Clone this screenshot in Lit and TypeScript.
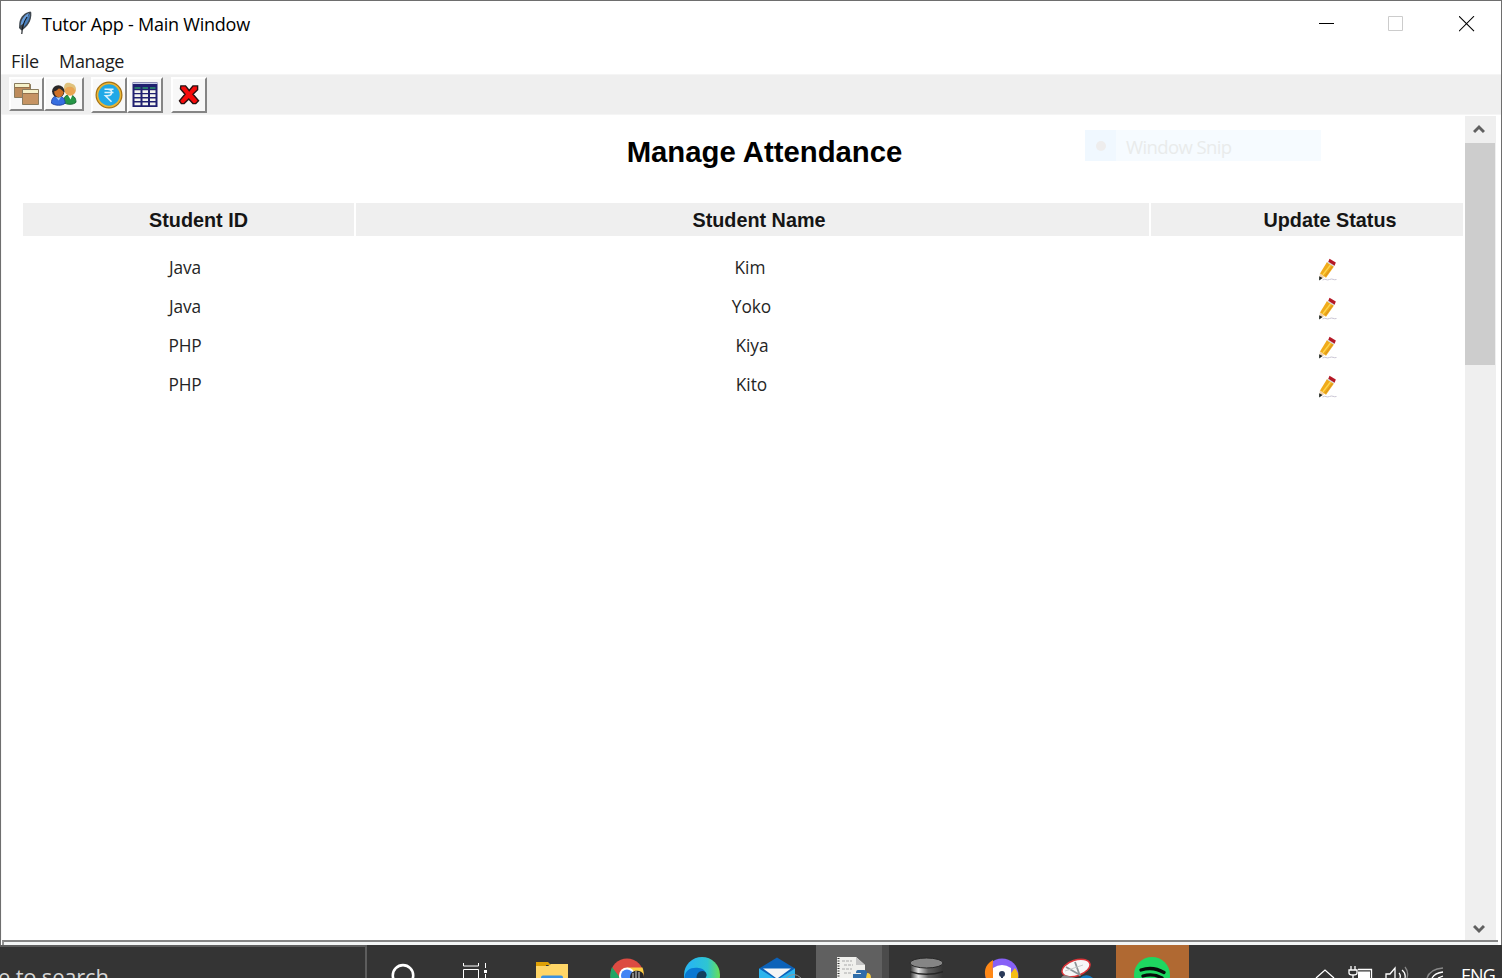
import { LitElement, html, css, svg } from "lit";
import { customElement } from "lit/decorators.js";

const rows = [
  { id: "Java", name: "Kim", cls: "kim" },
  { id: "Java", name: "Yoko", cls: "yoko" },
  { id: "PHP", name: "Kiya", cls: "kiya" },
  { id: "PHP", name: "Kito", cls: "kito" },
];

const feather = html`<svg class="feather" width="16" height="26" viewBox="0 0 16 26">
  <path d="M13.500 1.500C8 2 3 7 2.300 13L2 18L4.500 20.500C10 17.500 15 11 14.300 2.500Z" fill="#3f474f"/>
  <path d="M12 3C8 4.500 4 9 3.500 15.500L9 12Z" fill="#6a9fdc"/>
  <path d="M13 3.500C13.300 9 10 14 6.500 17.500L7 12.500Z" fill="#4a80bd"/>
  <path d="M10 7C8 10 5 15 4.800 24" fill="none" stroke="#15191d" stroke-width="1.100"/>
</svg>`;

const folders = html`<svg width="36" height="36" viewBox="0 0 36 36">
  <g stroke="#8a7c5f" stroke-width="1"><path d="M5.500 7.500h15l1 1v13h-16z" fill="#bd8b5b"/><path d="M6 8h14v3h-14z" fill="#f5f1c9" stroke="none"/><path d="M6 11.500h15" stroke="#94704b"/>
  <path d="M13.500 13.500h16v15h-16z" fill="#c69463"/><path d="M14 14h15v3h-15z" fill="#f5f1c9" stroke="none"/><path d="M14 17.500h15" stroke="#94704b"/></g>
</svg>`;

const people = html`<svg width="38" height="36" viewBox="0 0 38 36"><g transform="translate(1 2.600) scale(.91)">
  <path d="M19 26C19 20 22 18 26 18s7 3 7 8c-3 3-10 3-14 0z" fill="#259646" stroke="#176732"/><path d="M24 18l3 5 2-5z" fill="#fff"/>
  <circle cx="26.500" cy="12.500" r="6.300" fill="#e9a453"/><path d="M20 13c-1-8 3-9 7-8s7 3 5 9c-1-4-3-5-6-5s-4 1-6 4z" fill="#dfc27d"/>
  <path d="M6 27c0-6 3-8 7-8s8 2 8 8c-3 3-11 3-15 0z" fill="#366ee0" stroke="#2142a0"/><path d="M10 19l4 5 3-5z" fill="#a9cdf7"/>
  <circle cx="13.500" cy="14" r="6.800" fill="#292728"/><path d="M9 14c2 0 4-2 5-3 2 0 4 2 5.500 4-1 4-3 5.500-5.500 5.500s-5-2.500-5-6.500z" fill="#cf7027"/>
</g></svg>`;

const rupee = html`<svg width="36" height="36" viewBox="0 0 36 36">
  <circle cx="18" cy="18" r="12.300" fill="#1fa8e7" stroke="#a67112" stroke-width="2.400"/><circle cx="18" cy="18" r="11.500" fill="none" stroke="#e8b637" stroke-width="1.600"/>
  <path d="M13.500 12.200h9M13.500 15.500h9M13.500 12.200h3c6 0 5 6.500 0 6.500h-2l6 6" fill="none" stroke="#d9f1fc" stroke-width="1.600"/>
</svg>`;

const table = html`<svg width="36" height="36" viewBox="0 0 36 36">
  <path d="M5.500 5.500h25v24.500h-25z" fill="#202070"/><path d="M5.500 6.500h25" stroke="#c9cdea" stroke-width="1"/>
  <path d="M7.500 10h6v2h-6zM15.500 10h5.500v2h-5.500zM23 10h5.500v2H23z" fill="#27796d"/>
  <g fill="#f3f4ee">${[13.2, 17.3, 21.4, 25.5].map((y) => svg`<path d="M7.500 ${y}h6v2.700h-6zM15.500 ${y}h5.500v2.700h-5.500zM23 ${y}h5.500v2.700h-5.500z"/>`)}</g>
</svg>`;

const redCross = html`<svg width="36" height="36" viewBox="0 0 36 36"><g transform="translate(1.500 1) scale(.93)">
  <path d="M9 8.500h5l4 5 4-5h5v4l-5 5 6 7-3 3h-3l-4.500-5-5 5h-3l-2-3 6-7-5-6z" fill="#f60b0b" stroke="#251010" stroke-width="1.500"/></g>
</svg>`;

const pencil = html`<svg class="pencil" width="20" height="24" viewBox="0 0 20 24">
  <path d="M4.500 22c3-2 4 1 7-.500s4 1 7 0" fill="none" stroke="#cbc7d5" stroke-width="1"/>
  <path d="M1.800 15.500l4.700 3.500-5 3z" fill="#efd0ae"/><path d="M1.200 18.200l3.300 1.800-3.300 2.500z" fill="#18221f"/>
  <path d="M9 4l7 4.500-8 11.300-6-4.300z" fill="#f0ab1b"/><path d="M12.500 7l-7.700 10" stroke="#ffd64c" stroke-width="1.300"/><path d="M14.500 8.500l-7 9.500" stroke="#d8911d" stroke-width="1"/>
  <path d="M10.300 2.700l6.500 4.300-1 1.800-6.500-4z" fill="#d7dbdc"/><path d="M11.500 .800l6.300 3.700-1.200 3.200-6.300-4z" fill="#b51826"/>
</svg>`;

const task = {
  cortana: html`<svg width="73" height="33" viewBox="0 0 73 33"><circle cx="36" cy="30.300" r="10.200" fill="none" stroke="#fff" stroke-width="2.600"/></svg>`,
  view: html`<svg width="75" height="33" viewBox="0 0 75 33"><path d="M23.500 18v3h15v-3M23.500 33v-8.500h15V33M45.500 18v5M45.500 29v4" fill="none" stroke="#fff"/><path d="M44 25h3v3h-3z" fill="#fff"/></svg>`,
  folder: html`<svg width="75" height="33" viewBox="0 0 75 33"><path d="M21 17h12l3 3h-5v13H21z" fill="#dfa005"/><path d="M21 21h12l3-2h17v14H21z" fill="#ffd667"/><path d="M26 33v-.500q0-2 2-2h18q2 0 2 2v.500z" fill="#3990df"/></svg>`,
  chrome: html`<svg width="75" height="33" viewBox="0 0 75 33"><circle cx="37" cy="30" r="16.500" fill="#dc4b42"/><path d="M22 22l9 12H20.500q-1-6 1.500-12z" fill="#20a565"/><path d="M37 22.500h15.500q2 5 .5 10.500H40z" fill="#fcce45"/><circle cx="37" cy="30.500" r="8" fill="#fff"/><circle cx="37" cy="30.500" r="6" fill="#4285f4"/><path d="M40 33c0-6 4-8 9-7q5 1 5 7z" fill="#28282a"/><path d="M43 28v5M46 26v7M49 27v6" stroke="#d4d4d4"/></svg>`,
  edge: html`<svg width="75" height="33" viewBox="0 0 75 33"><defs><linearGradient id="edge"><stop offset=".2" stop-color="#28b7ee"/><stop offset=".65" stop-color="#2ec5d2"/><stop offset="1" stop-color="#69df55"/></linearGradient></defs><circle cx="37" cy="30" r="18" fill="url(#edge)"/><path d="M19.500 33c0-8 7-11 14-10 5 0 8 4 8 8-4-4-10-3-9 2z" fill="#0878d3"/><path d="M31.500 33c0-4 2-7 6-7s5 4 3 7z" fill="#123f5e"/></svg>`,
  mail: html`<svg width="76" height="33" viewBox="0 0 76 33"><path d="M19 23.500L37 12.500l18 11V33H19z" fill="#0c62b9"/><path d="M23 23.500h28L38 33h-2z" fill="#f5f5f5"/><path d="M19 23.500L34 33H19zM55 23.500L40 33h15z" fill="#2cb4ed"/><path d="M46 33q8-7 15 0" fill="none" stroke="#8f9494"/></svg>`,
  python: html`<svg width="66" height="33" viewBox="0 0 66 33"><path d="M21 12h19l9 8v13H21z" fill="#f0f0ed"/><path d="M40 12v8h9z" fill="#c5c5c5"/><path d="M22.500 13v20" stroke="#333" stroke-width="2" stroke-dasharray="1 1.500"/><path d="M26 16h10M28 20h9M26 24h10M28 28h8" stroke="#aaa" stroke-dasharray="3 1"/><path d="M42 25h6q3 0 3 3v5H37v-4h8v-1h-5q0-3 2-3z" fill="#2f6da9"/><path d="M51 28q4 0 4 5h-5z" fill="#f5cc41"/></svg>`,
  database: html`<svg width="75" height="33" viewBox="0 0 75 33"><defs><linearGradient id="disk"><stop stop-color="#292929"/><stop offset=".25" stop-color="#e2e2e2"/><stop offset=".55" stop-color="#606060"/><stop offset="1" stop-color="#333"/></linearGradient></defs><path d="M21 18v15h33V18z" fill="url(#disk)"/><ellipse cx="37.500" cy="18" rx="16.500" ry="5" fill="#858585" stroke="#262626"/><path d="M21 26q16 5 33 0v1.500q-16 5-33 0z" fill="#252525"/></svg>`,
  lock: html`<svg width="76" height="33" viewBox="0 0 76 33"><circle cx="38" cy="30" r="16.500" fill="#8761f7"/><path d="M29 15C20 20 20 28 22 33h11C27 28 29 22 29 15z" fill="#ff8816"/><path d="M51 23q4 5 3 10H43z" fill="#f5bd16"/><path d="M29 23q9-6 18 0v10H29z" fill="#fff"/><circle cx="38" cy="29" r="3" fill="#293a59"/><path d="M38 29v4" stroke="#293a59" stroke-width="2"/></svg>`,
  snip: html`<svg width="76" height="33" viewBox="0 0 76 33"><ellipse cx="36" cy="23" rx="14.500" ry="7.800" transform="rotate(-18 36 23)" fill="#f7f7f7" stroke="#dc3438" stroke-width="1.500"/><path d="M35 17l5 14M26 22l14 8" stroke="#8d9498" stroke-width="1.800"/><path d="M25 26l18-6" stroke="#ccc"/><path d="M21 33q2-4 7-2l8 2z" fill="#888"/><path d="M40 33q4-4 10-2l3 2z" fill="#147bc1"/></svg>`,
  spotify: html`<svg width="73" height="33" viewBox="0 0 73 33"><circle cx="36" cy="30" r="18" fill="#1ed760"/><path d="M25 25q12-4 23 2.500M27 31q10-3 19 2" fill="none" stroke="#080d0a" stroke-width="3.300" stroke-linecap="round"/></svg>`,
};

@customElement("app-root")
export class AppRoot extends LitElement {
  static styles = css`
    :host { display: block; width: 1502px; height: 978px; overflow: hidden; font-family: "Open Sans", "Noto Sans", sans-serif; color: #000; }
    * { box-sizing: border-box; }
    svg { display: block; flex: none; }
    .window { height: 945px; background: #fff; border: 1px solid #6e6e6e; border-bottom: 0; display: flex; flex-direction: column; }
    .title { height: 48px; display: flex; align-items: flex-start; flex: none; }
    .feather { margin: 9px 9px 0 16px; }
    .caption { font-size: 18px; line-height: 24px; margin-top: 11px; letter-spacing: -.23px; white-space: nowrap; flex: 1; }
    .controls { padding-right: 26px; padding-top: 15px; display: flex; gap: 54px; }
    .restore { margin-left: -1px; margin-right: 1px; }
    .menu { height: 25px; flex: none; display: flex; gap: 20px; padding: 0 0 0 10px; font-size: 18px; line-height: 24px; color: #1c1c1c; }
    .file { letter-spacing: -.1px; } .manage { letter-spacing: -.35px; }
    .tools { height: 41px; flex: none; background: #efefef; padding: 2px 0 0 8px; display: flex; align-items: flex-start; border-top: 1px solid #f5f5f5; border-bottom: 1px solid #f5f5f5; }
    .tool { height: 34px; width: 35px; overflow: hidden; display: flex; align-items: center; justify-content: center; background: #f8f8f8; border: 2px solid #fff; border-right-color: #858585; border-bottom-color: #858585; }
    .users { width: 40px; } .money { height: 36px; width: 36px; margin-left: 7px; } .grid { height: 36px; width: 36px; } .remove { height: 36px; width: 36px; margin-left: 8px; }
    .body { flex: 1; min-height: 0; display: flex; border-left: 1px solid #f7f7f7; }
    .content { width: 1462px; padding-left: 21px; }
    h1 { font: bold 29.3px/34px "Liberation Sans", sans-serif; margin: 0; padding: 20px 0 0 42px; height: 88px; text-align: center; white-space: nowrap; }
    .head { height: 33px; display: grid; grid-template-columns: 331px 793px 312px; gap: 2px; font: bold 19.800px/33px "Liberation Sans", sans-serif; color: #151515; }
    .head > div { background: #efefef; text-align: center; padding-top: 1px; height: 33px; }
    .head > :first-child { padding-left: 20px; } .head > :nth-child(2) { padding-left: 13px; } .head > :nth-child(3) { padding-left: 46px; }
    .rows { padding-top: 12px; }
    .row { height: 39px; display: grid; grid-template-columns: 323px 809px 346px; line-height: 40px; font-size: 17.300px; color: #252525; text-align: center; }
    .row .id { padding-left: 1px; letter-spacing: -.1px; }
    .pencil { margin: 10px 0 0 163px; }
    .kim { padding-right: 1px; } .yoko { padding-left: 2px; } .kiya { padding-left: 3px; letter-spacing: -.1px; } .kito { padding-left: 2px; }
    .scroll { width: 31px; margin: 1px 0 0 1px; background: #efefef; display: flex; flex-direction: column; }
    .arrow { height: 27px; display: flex; align-items: center; justify-content: center; padding: 0 3px 1px 0; }
    .thumb { height: 222px; width: 30px; background: #cdcdcd; } .track { flex: 1; }
    .down { height: 22px; padding-bottom: 0; }
    .edge { height: 5px; flex: none; border-top: 2px solid #858585; background: #f3f5f5; margin: 0 3px 0 1px; border-left: 2px solid #929292; }
    .snip { position: absolute; left: 1085px; top: 130px; width: 236px; height: 31px; background: #f6fbff; display: flex; color: #e9ebeb; line-height: 33px; font-size: 18.500px; white-space: nowrap; }
    .bullet { width: 31px; background: #f0f8ff; display: flex; align-items: center; justify-content: center; margin-right: 10px; }
    .dot { width: 10px; height: 10px; border-radius: 50%; background: #eeeded; }
    .sniplabel { letter-spacing: -.6px; }
    .taskbar { height: 33px; background: #343434; display: grid; grid-template-columns: 367px 73px 75px 75px 75px 75px 76px 66px 7px 75px 76px 76px 73px 313px; overflow: hidden; }
    .search { overflow: hidden; border-top: 2px solid #5d5d5d; border-right: 2px solid #5d5d5d; color: #d5d5d5; font-size: 22px; line-height: 30px; padding-top: 14px; white-space: nowrap; letter-spacing: -.2px; }
    .query { margin-left: -2px; }
    .active { background: #606060; } .divider { background: #4b4b4b; } .music { background: #b06932; }
    .tray { display: flex; overflow: hidden; color: #fff; font-size: 18px; line-height: 24px; }
    .lang { padding-top: 18px; letter-spacing: -.9px; }
  `;

  render() {
    return html`
      <div class="window">
        <div class="title">${feather}<div class="caption">Tutor App - Main Window</div>
          <div class="controls">
            <svg width="15" height="16" viewBox="0 0 15 16"><path d="M0 7.500h15" stroke="#000"/></svg>
            <svg class="restore" width="17" height="16" viewBox="0 0 17 16"><path d="M1.500.500h14v14h-14z" fill="none" stroke="#ccc"/></svg>
            <svg width="16" height="16" viewBox="0 0 16 16"><path d="M0 .200l15 15M15 .200l-15 15" stroke="#000" stroke-width="1.100"/></svg>
          </div>
        </div>
        <div class="menu"><span class="file">File</span><span class="manage">Manage</span></div>
        <div class="tools">
          <div class="tool">${folders}</div><div class="tool users">${people}</div>
          <div class="tool money">${rupee}</div><div class="tool grid">${table}</div><div class="tool remove">${redCross}</div>
        </div>
        <div class="body">
          <div class="content">
            <h1>Manage Attendance</h1>
            <div class="head"><div>Student ID</div><div>Student Name</div><div>Update Status</div></div>
            <div class="rows">${rows.map((r) => html`<div class="row"><div class="id">${r.id}</div><div class=${r.cls}>${r.name}</div><div>${pencil}</div></div>`)}</div>
          </div>
          <div class="scroll">
            <div class="arrow"><svg width="12" height="10" viewBox="0 0 12 10"><path d="M1 8l5-5 5 5" fill="none" stroke="#606060" stroke-width="3"/></svg></div>
            <div class="thumb"></div><div class="track"></div>
            <div class="arrow down"><svg width="12" height="10" viewBox="0 0 12 10"><path d="M1 2l5 5 5-5" fill="none" stroke="#606060" stroke-width="3"/></svg></div>
          </div>
        </div>
        <div class="edge"></div>
      </div>
      <div class="taskbar">
        <div class="search"><div class="query">e to search</div></div>
        <div>${task.cortana}</div><div>${task.view}</div><div>${task.folder}</div><div>${task.chrome}</div><div>${task.edge}</div><div>${task.mail}</div>
        <div class="active">${task.python}</div><div class="divider"></div><div>${task.database}</div><div>${task.lock}</div><div>${task.snip}</div><div class="music">${task.spotify}</div>
        <div class="tray">
          <svg width="272" height="33" viewBox="0 0 272 33" fill="none" stroke="#fff" stroke-width="1.300">
            <path d="M127 33l9-8 9 8"/><path d="M162 21v4M166 21v4M160 25h8v3q0 2-4 2t-4-2zM164 30v3M169 24.500h13.500V33"/><path d="M169 26.500h12V33h-12z" fill="#fff" stroke="none"/>
            <path d="M197 33v-4h4l5-6v10M210 28q2 2 1 5M213 25q4 3 3 8"/><path d="M216 22q4 5 2 11" stroke="#888"/><path d="M238 33q3-9 16-10" stroke="#888"/><path d="M243 33q3-5 11-6M249 33l5-2"/>
          </svg><div class="lang">ENG</div>
        </div>
      </div>
      <div class="snip"><div class="bullet"><div class="dot"></div></div><div class="sniplabel">Window Snip</div></div>`;
  }
}
